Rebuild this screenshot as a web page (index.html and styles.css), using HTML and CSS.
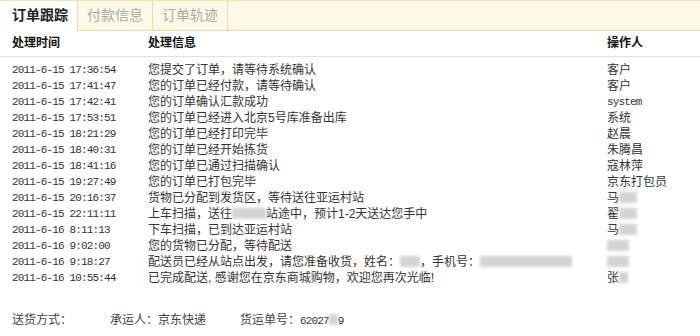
FILE: index.html
```html
<!DOCTYPE html>
<html>
<head>
<meta charset="utf-8">
<link rel="stylesheet" href="styles.css">
</head>
<body>
<div class="tabs">
  <div class="tab active">订单跟踪</div>
  <div class="tab">付款信息</div>
  <div class="tab">订单轨迹</div>
</div>
<div class="table">
  <div class="row head">
    <div class="c1">处理时间</div>
    <div class="c2">处理信息</div>
    <div class="c3">操作人</div>
  </div>
  <div class="body">
    <div class="row"><div class="c1 t">2011-6-15 17:36:54</div><div class="c2">您提交了订单，请等待系统确认</div><div class="c3">客户</div></div>
    <div class="row"><div class="c1 t">2011-6-15 17:41:47</div><div class="c2">您的订单已经付款，请等待确认</div><div class="c3">客户</div></div>
    <div class="row"><div class="c1 t">2011-6-15 17:42:41</div><div class="c2">您的订单确认汇款成功</div><div class="c3 t">system</div></div>
    <div class="row"><div class="c1 t">2011-6-15 17:53:51</div><div class="c2">您的订单已经进入北京5号库准备出库</div><div class="c3">系统</div></div>
    <div class="row"><div class="c1 t">2011-6-15 18:21:29</div><div class="c2">您的订单已经打印完毕</div><div class="c3">赵晨</div></div>
    <div class="row"><div class="c1 t">2011-6-15 18:40:31</div><div class="c2">您的订单已经开始拣货</div><div class="c3">朱腾昌</div></div>
    <div class="row"><div class="c1 t">2011-6-15 18:41:16</div><div class="c2">您的订单已通过扫描确认</div><div class="c3">寇林萍</div></div>
    <div class="row"><div class="c1 t">2011-6-15 19:27:49</div><div class="c2">您的订单已打包完毕</div><div class="c3">京东打包员</div></div>
    <div class="row"><div class="c1 t">2011-6-15 20:16:37</div><div class="c2">货物已分配到发货区，等待送往亚运村站</div><div class="c3">马<span class="blur w2"></span></div></div>
    <div class="row"><div class="c1 t">2011-6-15 22:11:11</div><div class="c2">上车扫描，送往<span class="blur w3"></span>站途中，预计1-2天送达您手中</div><div class="c3">翟<span class="blur w2"></span></div></div>
    <div class="row"><div class="c1 t">2011-6-16 8:11:13</div><div class="c2">下车扫描，已到达亚运村站</div><div class="c3">马<span class="blur w2"></span></div></div>
    <div class="row"><div class="c1 t">2011-6-16 9:02:00</div><div class="c2">您的货物已分配，等待配送</div><div class="c3"><span class="blur w25"></span></div></div>
    <div class="row"><div class="c1 t">2011-6-16 9:18:27</div><div class="c2">配送员已经从站点出发，请您准备收货，姓名：<span class="blur w2s"></span>，手机号：<span class="blur w11"></span></div><div class="c3"><span class="blur w25"></span></div></div>
    <div class="row"><div class="c1 t">2011-6-16 10:55:44</div><div class="c2">已完成配送, 感谢您在京东商城购物，欢迎您再次光临!</div><div class="c3">张<span class="blur w1"></span></div></div>
  </div>
</div>
<div class="footer">
  <span class="f1">送货方式：</span>
  <span class="f2">承运人：京东快递</span>
  <span class="f3">货运单号：<span class="t">62027</span><span class="blur w1"></span><span class="t">9</span></span>
</div>
</body>
</html>
```
FILE: styles.css
```css
* { box-sizing: border-box; }
body {
  margin: 0;
  width: 700px;
  height: 336px;
  background: #fff;
  font-family: "Liberation Sans", "Noto Sans CJK SC", sans-serif;
  font-size: 12px;
  color: #333;
  overflow: hidden;
}
.tabs {
  display: flex;
  height: 31px;
  background: #fdf9e6;
  border-top: 1px solid #eee3ad;
  border-bottom: 1px solid #e6dba6;
}
.tab {
  flex: none;
  width: 75px;
  height: 30px;
  line-height: 29px;
  padding-left: 9px;
  font-size: 14px;
  color: #aaa;
  white-space: nowrap;
  border-right: 1px solid #e8dda8;
}
.tab.active {
  width: 78px;
  padding-left: 12px;
  background: #fff;
  color: #222;
  font-weight: bold;
}
.row {
  display: grid;
  grid-template-columns: 148px 459px 1fr;
  height: 16px;
  line-height: 16px;
  white-space: nowrap;
}
.row .c1 { padding-left: 12px; }
.row.head {
  height: 26px;
  line-height: 25px;
  font-weight: bold;
  color: #111;
  border-bottom: 1px solid #e2e2e2;
}
.body { padding-top: 5px; }
.t {
  font-family: "Liberation Mono", "DejaVu Sans Mono", monospace;
  font-size: 11px;
  letter-spacing: -0.85px;
  color: #333;
}
.blur {
  display: inline-block;
  height: 11px;
  vertical-align: -1px;
  background: #c9c9c9;
  filter: blur(1.5px);
  opacity: 0.8;
}
.w1 { width: 9px; }
.w2 { width: 18px; }
.w2s { width: 20px; }
.w25 { width: 22px; }
.w3 { width: 34px; }
.w11 { width: 92px; }
.footer {
  display: flex;
  padding: 26px 0 0 12px;
  line-height: 16px;
  color: #444;
  white-space: nowrap;
}
.f1 { width: 98px; }
.f2 { width: 130px; }
```
